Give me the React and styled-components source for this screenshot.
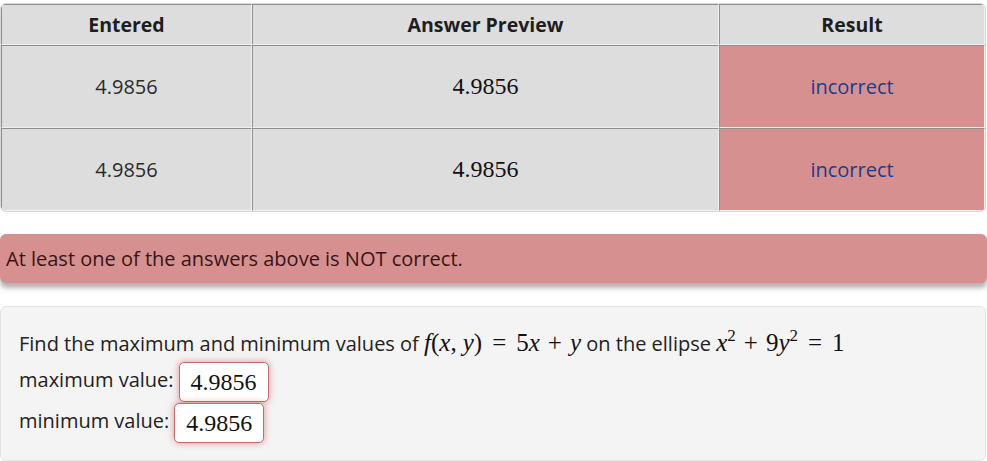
import styled, { createGlobalStyle } from 'styled-components';

const GlobalStyle = createGlobalStyle`
  body {
    margin: 0;
    background: #ffffff;
    font-family: "Open Sans", "Noto Sans", sans-serif;
    color: #222;
  }
`;

const Page = styled.div`
  width: 986px;
  padding-top: 3px;
`;

const TableWrap = styled.div`
  border: 1px solid #d8d8d8;
  border-radius: 6px;
  overflow: hidden;
  background: #f4f4f4;
`;

const Table = styled.table`
  width: 100%;
  border-collapse: separate;
  border-spacing: 0;
  table-layout: fixed;
`;

const HeadCell = styled.th`
  height: 39px;
  padding: 0;
  background: #dddddd;
  border-top: 1px solid #8f8f8f;
  border-left: 1px solid #8f8f8f;
  border-right: 1px solid #f0f0f0;
  border-bottom: 1px solid #f0f0f0;
  font-size: 19.5px;
  font-weight: 700;
  color: #1e1e1e;
  width: ${(p) => (p.$w ? `${p.$w}px` : 'auto')};
`;

const Cell = styled.td`
  height: 81px;
  padding: 0;
  text-align: center;
  background: ${(p) => (p.$bad ? '#d69090' : '#dddddd')};
  border-top: 1px solid #8f8f8f;
  border-left: 1px solid #8f8f8f;
  border-right: 1px solid #f0f0f0;
  border-bottom: 1px solid #f0f0f0;
  font-size: 20px;
  color: ${(p) => (p.$bad ? '#1c3c8c' : '#2a2a2a')};
`;

const MathCell = styled(Cell)`
  font-family: "Liberation Serif", "DejaVu Serif", serif;
  font-size: 24px;
  color: #111;
`;

const Alert = styled.div`
  margin-top: 22px;
  height: 49px;
  display: flex;
  align-items: center;
  padding: 0 6px;
  width: 987px;
  box-sizing: border-box;
  background: #d69090;
  border-radius: 6px;
  box-shadow: 0 5px 5px rgba(0, 0, 0, 0.3);
  font-size: 20px;
  color: #3a1414;
`;

const Problem = styled.div`
  margin-top: 23px;
  background: #f4f4f4;
  border: 1px solid #e2e2e2;
  border-radius: 6px;
  padding: 20px 18px 18px;
  font-size: 20px;
  color: #222;
`;

const Line = styled.div`
  height: ${(p) => p.$h}px;
  line-height: ${(p) => p.$h}px;
  white-space: nowrap;
`;

const M = styled.span`
  font-family: "Liberation Serif", "DejaVu Serif", serif;
  font-style: ${(p) => (p.$up ? 'normal' : 'italic')};
  font-size: 25px;
  color: #111;
`;

const Op = styled(M).attrs({ $up: true })`
  padding: 0 ${(p) => p.$gap || 8}px;
`;

const Sup = styled.sup`
  font-size: 17px;
  font-style: normal;
  line-height: 0;
  vertical-align: 10px;
  font-family: "Liberation Serif", serif;
  color: #111;
`;

const AnswerBox = styled.span`
  display: inline-block;
  vertical-align: middle;
  margin-left: 5px;
  width: 90px;
  height: 40px;
  line-height: 38px;
  text-align: center;
  box-sizing: border-box;
  background: #fff;
  border: 1px solid #c86a6a;
  border-radius: 5px;
  box-shadow: 0 0 7px rgba(200, 70, 70, 0.55);
  font-family: "Liberation Serif", "DejaVu Serif", serif;
  font-size: 24px;
  color: #111;
`;

const rows = [1, 2];

export default function App() {
  return (
    <>
      <GlobalStyle />
      <Page>
        <TableWrap>
          <Table>
            <thead>
              <tr>
                <HeadCell $w={249}>Entered</HeadCell>
                <HeadCell $w={465}>Answer Preview</HeadCell>
                <HeadCell>Result</HeadCell>
              </tr>
            </thead>
            <tbody>
              {rows.map((r) => (
                <tr key={r}>
                  <Cell>4.9856</Cell>
                  <MathCell>4.9856</MathCell>
                  <Cell $bad>incorrect</Cell>
                </tr>
              ))}
            </tbody>
          </Table>
        </TableWrap>
        <Alert>At least one of the answers above is NOT correct.</Alert>
        <Problem>
          <Line $h={32}>
            Find the maximum and minimum values of{' '}
            <M>f</M><M $up>(</M><M>x</M><M $up>,</M><Op $gap={3} /><M>y</M><M $up>)</M>
            <Op $gap={10}>=</Op><M $up>5</M><M>x</M><Op>+</Op><M>y</M>
            {' '}on the ellipse{' '}
            <M>x</M><Sup>2</Sup><Op>+</Op><M $up>9</M><M>y</M><Sup>2</Sup><Op $gap={10}>=</Op><M $up>1</M>
          </Line>
          <Line $h={41}>
            maximum value:<AnswerBox>4.9856</AnswerBox>
          </Line>
          <Line $h={42}>
            minimum value:<AnswerBox>4.9856</AnswerBox>
          </Line>
        </Problem>
      </Page>
    </>
  );
}
